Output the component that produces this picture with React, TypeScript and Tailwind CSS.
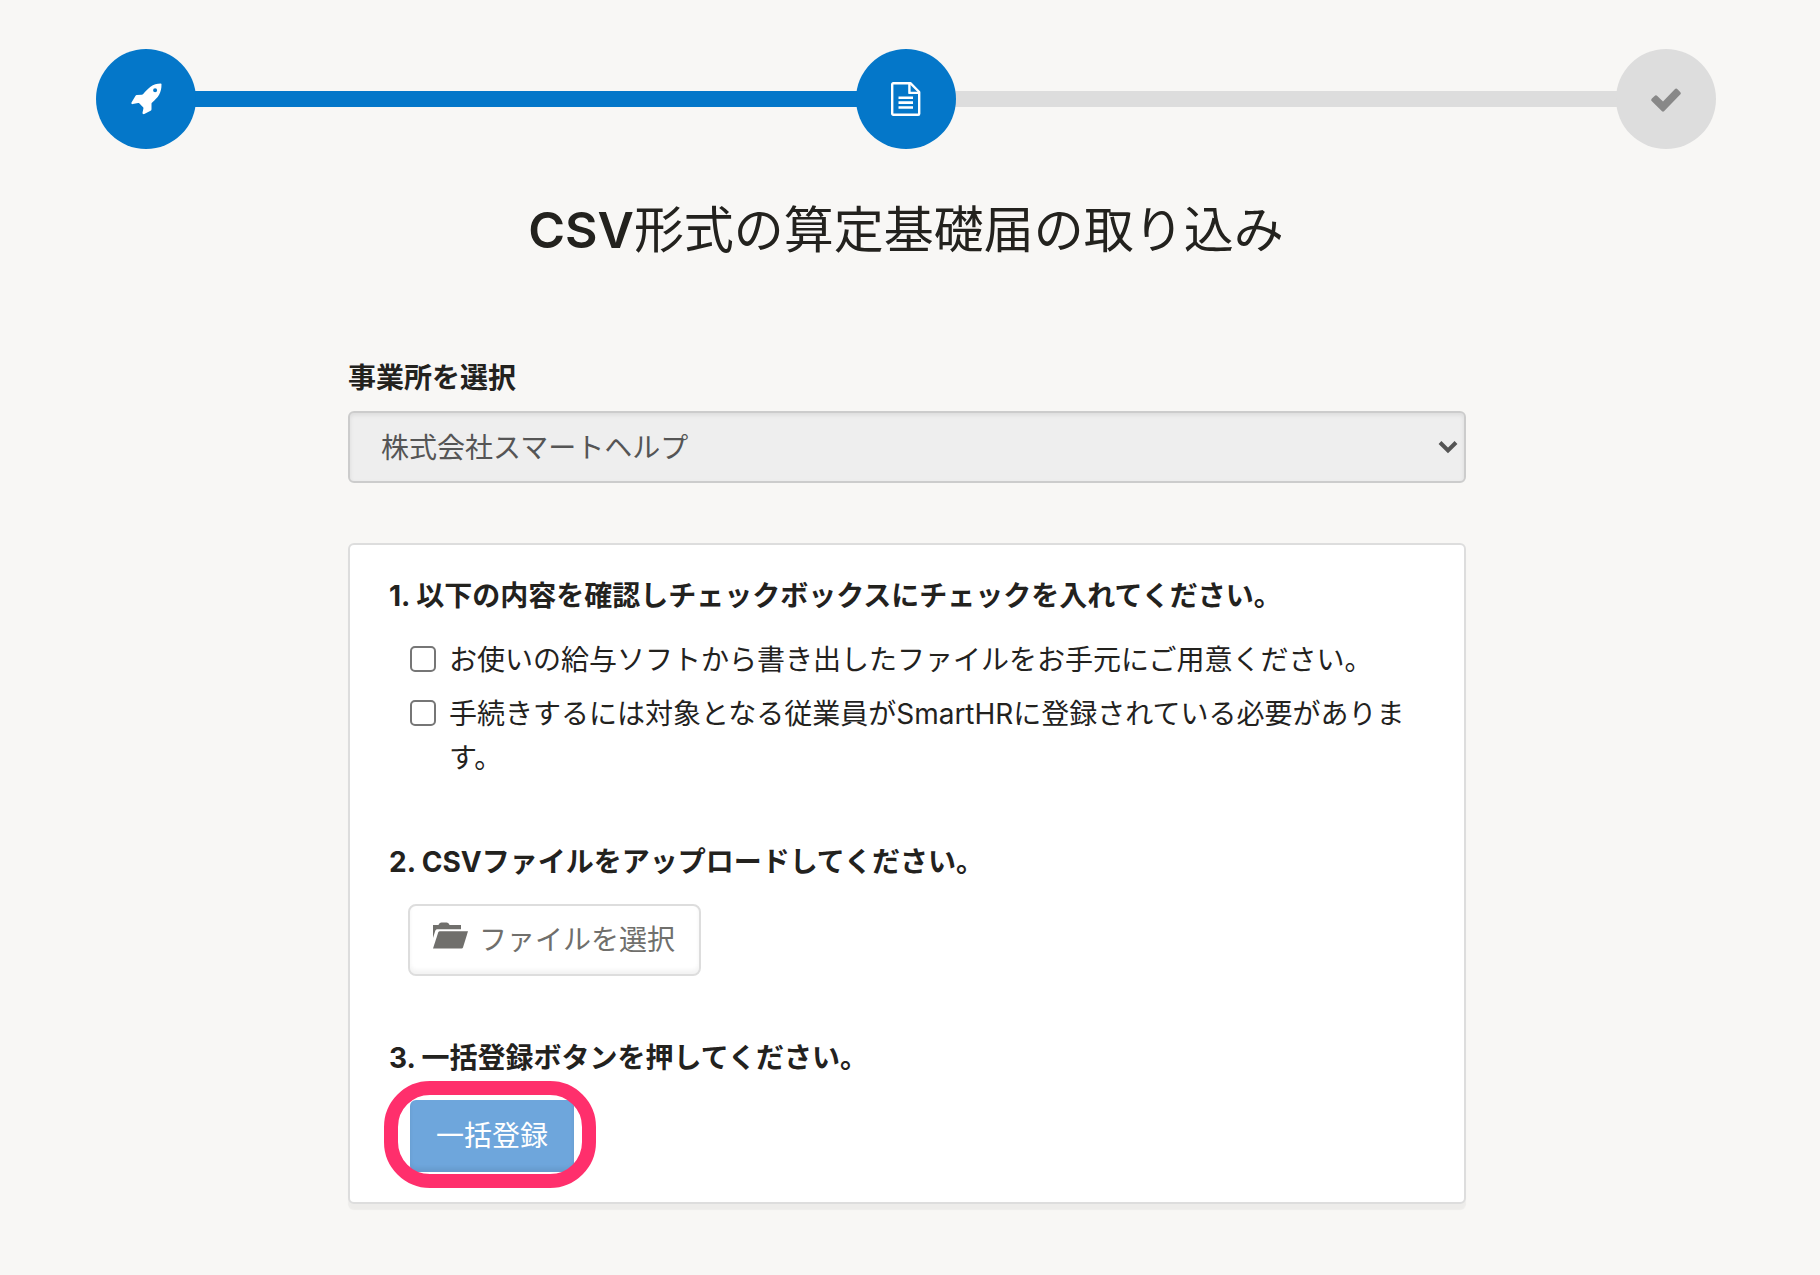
import type { ReactNode } from "react";

function RocketIcon() {
  return (
    <svg viewBox="0 0 32 32" className="size-8" fill="currentColor" aria-hidden="true">
      <path
        fillRule="evenodd"
        d="M30.8.6c.4 0 .7.3.7.7 0 4-.6 7.400-2.400 10.400-1.700 3-4.300 5.300-6.900 7.700-.5.4-.7.8-.7 1.400v5.500c0 .7-.3 1.200-.9 1.500l-6.300 3.200c-.9.500-2-.2-1.800-1.200l.9-4.300c.1-.5 0-.8-.3-1.200l-3.900-4c-.3-.3-.7-.4-1.100-.3l-5.300 1.100c-1 .2-1.800-.8-1.300-1.700l3.900-6.500c.3-.6.800-.9 1.400-.9l4.900-.3c.6 0 1.100-.3 1.500-.7 2.300-2.500 4.400-5 7.300-7.200C23.500 1.600 27 .7 30.800.6ZM25.100 5.300a2 2 0 1 0 0 4 2 2 0 0 0 0-4Z"
      />
    </svg>
  );
}

function DocumentIcon() {
  return (
    <svg viewBox="0 0 30 34" className="h-[34px] w-[30px]" fill="none" stroke="currentColor" strokeWidth="2.400" strokeLinejoin="round" aria-hidden="true">
      <path d="M2.200 1.200h17.200l8.800 8.800v21.800a1 1 0 0 1-1 1h-25a1 1 0 0 1-1-1v-29.600a1 1 0 0 1 1-1Z" />
      <path d="M18.400 1.200v9.700h9.600" />
      <path d="M7.500 15.800h14.500M7.500 20.600h14.500M7.500 25.500h14.500" strokeWidth="2.600" strokeLinecap="butt" />
    </svg>
  );
}

function CheckIcon() {
  return (
    <svg viewBox="0 0 30 24" className="h-6 w-[30px]" fill="currentColor" aria-hidden="true">
      <path d="M11 23.300a1.500 1.500 0 0 0 2 0L29.200 6.600a1.900 1.900 0 0 0 0-2.600L26.500 1.200a1.900 1.900 0 0 0-2.700 0L12 13.400 6.300 8a1.900 1.900 0 0 0-2.700 0L.9 10.600a1.900 1.900 0 0 0 0 2.700Z" />
    </svg>
  );
}

function FolderIcon() {
  return (
    <svg viewBox="0 0 35 27" className="h-[27px] w-[35px]" fill="currentColor" aria-hidden="true">
      <path d="M0 3h5.500C6 1.500 7 .6 8.500.6h5c1.500 0 2.500.9 3 2.400h11.500v4.200H4.600c-1.300 0-2 .5-2.400 1.700L0 16Z" />
      <path d="M6.900 9.200h28.100L30 25.400c-.3.700-.7 1-1.400 1H0L5.200 10.400c.3-.8.900-1.200 1.700-1.200Z" />
    </svg>
  );
}

function Step({ done, label, children }: { done: boolean; label: string; children: ReactNode }) {
  return (
    <li
      aria-label={label}
      className={
        done
          ? "z-10 flex size-[100px] shrink-0 items-center justify-center rounded-full bg-[#0477c9] text-white"
          : "z-10 flex size-[100px] shrink-0 items-center justify-center rounded-full bg-[#dddddd] pt-0.5 text-[#888888]"
      }
    >
      {children}
    </li>
  );
}

function Section({ title, children }: { title: string; children: ReactNode }) {
  return (
    <section>
      <h2 className="mb-5 font-bold">{title}</h2>
      {children}
    </section>
  );
}

const checks = [
  "お使いの給与ソフトから書き出したファイルをお手元にご用意ください。",
  "手続きするには対象となる従業員がSmartHRに登録されている必要があります。",
];

export default function App() {
  return (
    <main
      lang="ja"
      className="min-h-screen bg-[#f8f7f5] pt-[49px] pr-[104px] pb-16 pl-24 font-['Inter','Noto_Sans_CJK_JP',sans-serif] text-[28px] leading-[44px] text-[#23221e]"
    >
      <ol className="flex items-center">
        <Step done label="開始">
          <RocketIcon />
        </Step>
        <li aria-hidden="true" className="-mx-1 h-4 grow bg-[#0477c9]" />
        <Step done label="取り込み">
          <DocumentIcon />
        </Step>
        <li aria-hidden="true" className="-mx-1 h-4 grow bg-[#dddddd]" />
        <Step done={false} label="完了">
          <CheckIcon />
        </Step>
      </ol>

      <h1 className="mt-[51px] text-center text-[50px] leading-[60px]">
        <span className="font-semibold">CSV</span>形式の算定基礎届の取り込み
      </h1>

      <form className="mx-auto mt-24 max-w-[1120px] pl-0.5" onSubmit={(e) => e.preventDefault()}>
        <label htmlFor="office" className="block font-bold">
          事業所を選択
        </label>
        <div className="relative mt-[11px]">
          <select
            id="office"
            disabled
            className="block h-[72px] w-full appearance-none rounded-md border-2 border-[#cccccc] bg-[#eeeeee] pt-0.5 pr-12 pl-[31px] text-[#555555] opacity-100 shadow-[inset_0_2px_4px_rgba(0,0,0,0.08)]"
          >
            <option>株式会社スマートヘルプ</option>
          </select>
          <svg
            viewBox="0 0 20 14"
            className="pointer-events-none absolute top-[29px] right-2 h-[14px] w-5"
            fill="none"
            stroke="#555555"
            strokeWidth="4"
            aria-hidden="true"
          >
            <path d="M2 2.500 10 10.500 18 2.500" />
          </svg>
        </div>

        <div className="mt-[60px] flex flex-col gap-[60px] rounded-md border-2 border-[#dddddd] bg-white px-[39px] pt-[29px] pb-[30px] shadow-[0_6px_1px_rgba(0,0,0,0.045)]">
          <Section title="1. 以下の内容を確認しチェックボックスにチェックを入れてください。">
            <ul className="flex flex-col gap-[10px] pl-[21px]">
              {checks.map((text) => (
                <li key={text}>
                  <label className="flex items-start gap-[13px]">
                    <input
                      type="checkbox"
                      className="mt-2 size-[26px] shrink-0 appearance-none rounded-[5px] border-2 border-[#767676] bg-white checked:bg-[#0477c9]"
                    />
                    <span>{text}</span>
                  </label>
                </li>
              ))}
            </ul>
          </Section>

          <Section title="2. CSVファイルをアップロードしてください。">
            <button
              type="button"
              className="ml-[19px] flex h-[72px] items-center gap-[11px] rounded-lg border-2 border-[#dddddd] bg-white pr-6 pl-[23px] text-[#706f6c] shadow-[inset_0_-4px_4px_rgba(0,0,0,0.05)]"
            >
              <span className="pb-2.5">
                <FolderIcon />
              </span>
              ファイルを選択
            </button>
          </Section>

          <Section title="3. 一括登録ボタンを押してください。">
            <div className="relative ml-[21px] w-fit">
              <button
                type="submit"
                className="block h-[72px] rounded-md bg-[#6ea6dc] px-[26px] text-white shadow-[inset_0_-4px_4px_rgba(0,0,0,0.07)]"
              >
                一括登録
              </button>
              <span
                aria-hidden="true"
                className="pointer-events-none absolute -top-[19px] -right-[22px] -bottom-4 -left-[26px] rounded-[46px] border-[14px] border-[#ff2f6c]"
              />
            </div>
          </Section>
        </div>
      </form>
    </main>
  );
}
